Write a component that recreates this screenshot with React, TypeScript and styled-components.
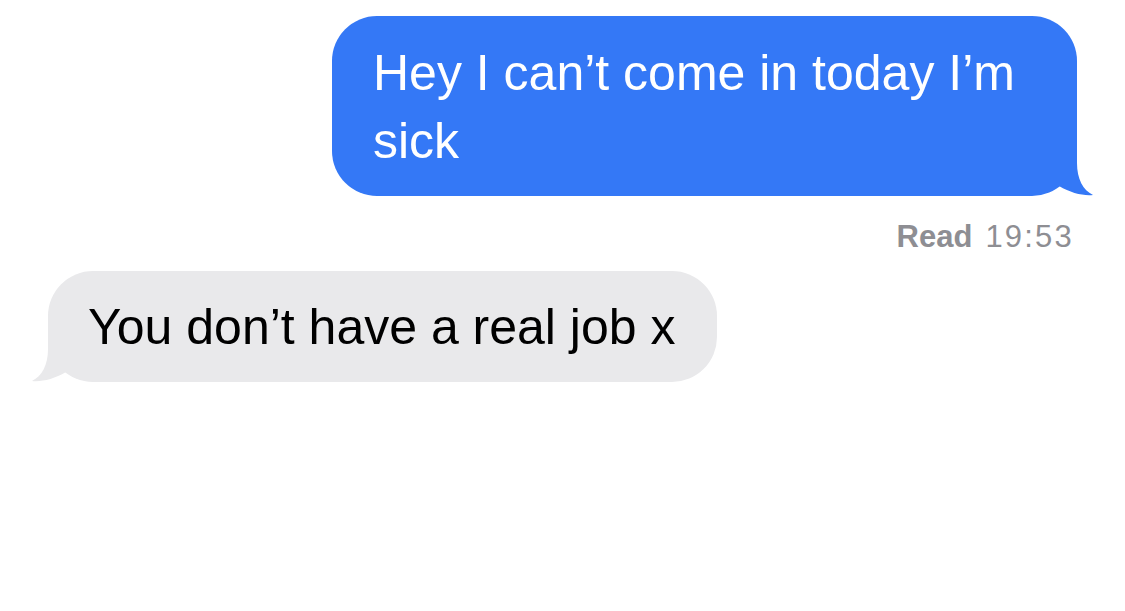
import * as React from "react";
import styled, { createGlobalStyle } from "styled-components";

const GlobalStyle = createGlobalStyle`
  html, body {
    margin: 0;
    padding: 0;
    background: #ffffff;
  }
  body {
    font-family: "Liberation Sans", Arial, sans-serif;
    -webkit-font-smoothing: antialiased;
  }
`;

const Thread = styled.div`
  width: 1125px;
  box-sizing: border-box;
  padding: 16px 48px;
  display: flex;
  flex-direction: column;
`;

const Bubble = styled.div<{ $me?: boolean }>`
  position: relative;
  box-sizing: border-box;
  max-width: 745px;
  align-self: ${(p) => (p.$me ? "flex-end" : "flex-start")};
  padding: ${(p) => (p.$me ? "23px 40px 21px 41px" : "22px 42px 21px 40px")};
  border-radius: 45px;
  background: ${(p) => (p.$me ? "#3478f6" : "#e9e9eb")};
  color: ${(p) => (p.$me ? "#ffffff" : "#000000")};
  font-size: 50px;
  line-height: 68px;
`;

const Tail = styled.svg<{ $me?: boolean }>`
  position: absolute;
  bottom: 0;
  width: 46px;
  height: 50px;
  ${(p) => (p.$me ? "right: -16px;" : "left: -16px; transform: scaleX(-1);")}
`;

const Receipt = styled.div`
  align-self: flex-end;
  margin: 23px 3px 16px 0;
  display: flex;
  gap: 13px;
  font-size: 31px;
  line-height: 36px;
  color: #8e8e93;
`;

const Status = styled.span`
  font-weight: 700;
`;

const Time = styled.span`
  letter-spacing: 2.2px;
`;

function BubbleTail({ me, color }: { me?: boolean; color: string }) {
  return (
    <Tail $me={me} viewBox="0 0 46 50">
      <path
        d="M0 0 H30 V17 C30 33 36 44 46 49 C36 50 24 47 12 40 L0 40 Z"
        fill={color}
      />
    </Tail>
  );
}

export default function App() {
  return (
    <>
      <GlobalStyle />
      <Thread>
        <Bubble $me>
          Hey I can’t come in today I’m sick
          <BubbleTail me color="#3478f6" />
        </Bubble>
        <Receipt>
          <Status>Read</Status>
          <Time>19:53</Time>
        </Receipt>
        <Bubble>
          You don’t have a real job x
          <BubbleTail color="#e9e9eb" />
        </Bubble>
      </Thread>
    </>
  );
}
